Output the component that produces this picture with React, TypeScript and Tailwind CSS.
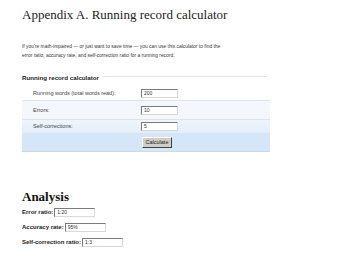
import React from "react";

const sans = { fontFamily: '"Liberation Sans", Arial, sans-serif' };

function Field({ value, w }: { value: string; w: string }) {
  return (
    <div
      className={`${w} h-[9px] bg-white border border-t-[#7a7a7a] border-l-[#7a7a7a] border-b-[#d8d8d8] border-r-[#d8d8d8] text-[5px] leading-[7px] pl-[2px] text-[#333]`}
    >
      {value}
    </div>
  );
}

export default function App() {
  return (
    <div className="w-[361px] h-[255px] bg-white overflow-hidden pl-[22px]" style={sans}>
      <h1
        className="mt-[7px] text-[13px] leading-[15px] text-[#222]"
        style={{ fontFamily: '"Liberation Serif", "Times New Roman", serif' }}
      >
        Appendix A. Running record calculator
      </h1>
      <p className="mt-[20px] text-[4.9px] leading-[9px] text-[#333]">
        If you're math-impaired — or just want to save time — you can use this calculator to find the
        <br />
        error ratio, accuracy rate, and self-correction ratio for a running record.
      </p>
      <div className="w-[248px] mt-[14px]">
        <div className="flex items-center h-[8px]">
          <span className="text-[6.2px] font-bold text-[#222] whitespace-nowrap">Running record calculator</span>
          <div className="flex-1 h-px bg-[#e4e4e4] ml-[3px] mr-[3px] -mt-[3px]" />
        </div>
        <div className="flex items-center h-[19px] pt-[5px] border-b border-[#dde3ea] bg-white">
          <span className="w-[119px] pl-[11px] text-[5.5px] text-[#444]">Running words (total words read):</span>
          <Field value="200" w="w-[37px]" />
        </div>
        <div className="flex items-center h-[19px] border-b border-[#dde3ea] bg-[#f4f8fd]">
          <span className="w-[119px] pl-[11px] text-[5.5px] text-[#444]">Errors:</span>
          <Field value="10" w="w-[37px]" />
        </div>
        <div className="flex items-center h-[14px] border-b border-[#dde3ea] bg-gradient-to-b from-[#eef5fc] to-[#e2eefa]">
          <span className="w-[119px] pl-[11px] text-[5.5px] text-[#444]">Self-corrections:</span>
          <Field value="5" w="w-[37px]" />
        </div>
        <div className="flex items-center h-[18px] border-b border-[#d0d8e0] bg-[#d5e6f8]">
          <span className="w-[120px]" />
          <div className="w-[30px] h-[11px] bg-[#cfcdc6] border border-t-white border-l-white border-b-[#404040] border-r-[#404040] text-[5.5px] leading-[9px] text-center text-[#222]">
            Calculate
          </div>
        </div>
      </div>
      <h2
        className="mt-[37px] text-[13px] leading-[15px] font-bold text-[#111]"
        style={{ fontFamily: '"Liberation Serif", "Times New Roman", serif' }}
      >
        Analysis
      </h2>
      <div className="mt-[4px] flex flex-col gap-[6px]">
        <div className="flex items-center gap-[1px] h-[9px]">
          <span className="text-[6px] font-bold text-[#222]">Error ratio:</span>
          <Field value="1:20" w="w-[41px]" />
        </div>
        <div className="flex items-center gap-[1px] h-[9px]">
          <span className="text-[6px] font-bold text-[#222]">Accuracy rate:</span>
          <Field value="95%" w="w-[41px]" />
        </div>
        <div className="flex items-center gap-[1px] h-[9px]">
          <span className="text-[6px] font-bold text-[#222]">Self-correction ratio:</span>
          <Field value="1:3" w="w-[41px]" />
        </div>
      </div>
    </div>
  );
}
